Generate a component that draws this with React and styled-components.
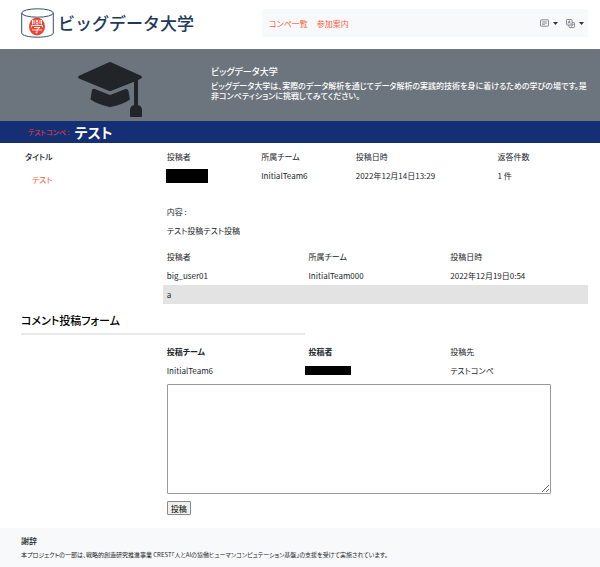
import React from "react";
import styled, { createGlobalStyle } from "styled-components";

const Global = createGlobalStyle`
  *, *::before, *::after { box-sizing: border-box; }
  body {
    margin: 0;
    background: #fff;
    color: #212529;
    font-family: "Noto Sans CJK JP", sans-serif;
    font-size: 8px;
    line-height: 11px;
    font-feature-settings: "palt";
  }
  h1, h2, h3, p { margin: 0; }
  a { color: #ff5a3c; text-decoration: none; }
`;

const Header = styled.header`
  display: grid;
  grid-template-columns: 241fr 326fr;
  align-items: center;
  padding: 8px 12px 11px 21px;
`;

const Brand = styled.a`
  display: flex;
  align-items: center;
  gap: 4px;
  color: #1d3a5c;
  font-size: 17px;
  font-weight: 500;
  line-height: 28px;
  white-space: nowrap;
  font-feature-settings: normal;
`;

const Nav = styled.nav`
  display: flex;
  align-items: center;
  height: 28px;
  gap: 9px;
  padding: 0 4px 0 7px;
  background: #f8f9fa;
`;

const NavTools = styled.div`
  display: flex;
  gap: 8px;
  margin-left: auto;
`;

const ToolButton = styled.button`
  display: flex;
  align-items: center;
  gap: 4px;
  padding: 0;
  border: 0;
  background: none;
  color: #6f6a78;
`;

const Banner = styled.section`
  display: grid;
  grid-template-columns: 1fr 2fr;
  min-height: 72px;
  padding: 0 12px 0 21px;
  background: #6c757d;
  color: #fff;
`;

const BannerArt = styled.div`
  padding: 13px 0 0 57px;
  color: #212529;
  svg { display: block; }
`;

const BannerText = styled.div`
  padding: 16px 0 0 1px;
`;

const BannerTitle = styled.h2`
  font-size: 9px;
  font-weight: 500;
  line-height: 14px;
  margin-bottom: 2px;
`;

const BannerCopy = styled.p`
  font-weight: 500;
  line-height: 10px;
`;

const TitleBar = styled.div`
  display: flex;
  align-items: center;
  gap: 5px;
  height: 22px;
  padding: 0 28px;
  background: #142f73;
  a {
    color: #f0423c;
    font-size: 7px;
  }
`;

const PageTitle = styled.h1`
  color: #fff;
  font-size: 14px;
  font-weight: 700;
  line-height: 20px;
`;

const Main = styled.main`
  padding: 4px 12px 13px 21px;
`;

const Columns = styled.section`
  display: grid;
  grid-template-columns: 1fr 3fr;
`;

const Side = styled.div`
  padding: 4px;
`;

const SideTitle = styled.h2`
  font-size: 8px;
  font-weight: 500;
  line-height: 11px;
  margin-bottom: 12px;
`;

const SideLink = styled.a`
  padding-left: 7px;
`;

const Body = styled.div`
  grid-column: 2;
`;

const Table = styled.table`
  width: 100%;
  table-layout: fixed;
  border-collapse: collapse;
`;

const Head = styled.th`
  width: ${(p) => p.$width};
  height: 19px;
  padding: 0 4px;
  text-align: left;
  font-weight: ${(p) => (p.$strong ? 700 : 400)};
`;

const Cell = styled.td`
  height: 19px;
  padding: 0 4px;
  background: ${(p) => (p.$shaded ? "#e3e3e3" : "transparent")};
`;

const Redacted = styled.span`
  display: block;
  width: ${(p) => p.$width};
  height: ${(p) => p.$height};
  margin-left: ${(p) => p.$offset};
  background: #000;
`;

const Content = styled.div`
  display: grid;
  gap: 8px;
  padding: 21px 4px 11px;
`;

const FormTitle = styled.h2`
  width: 50%;
  margin-bottom: 7px;
  padding: 7px 0 4px;
  border-bottom: 2px solid #e9e9e9;
  color: #000;
  font-size: 11px;
  font-weight: 500;
  line-height: 18px;
`;

const Form = styled.form`
  display: flex;
  flex-direction: column;
  align-items: flex-start;
  gap: 7px;
  padding: 4px 4px 0;
`;

const CommentBox = styled.textarea`
  display: block;
  width: 92%;
  height: 110px;
  border: 1px solid #999;
  border-radius: 1px;
  font: inherit;
`;

const Submit = styled.button`
  height: 14px;
  padding: 0 3px;
  border: 1px solid #8a8a8a;
  border-radius: 1px;
  background: #efefef;
  color: #000;
  font: inherit;
`;

const Footer = styled.footer`
  padding: 6px 12px 7px 21px;
  background: #f8f9fa;
  font-size: 6px;
`;

const FooterTitle = styled.h3`
  font-size: 8px;
  font-weight: 500;
  line-height: 13px;
  margin-bottom: 2px;
`;

const Logo = () => (
  <svg width="33" height="30" viewBox="0 0 33 30" fill="none" aria-hidden="true">
    <path d="M.7 5v20c0 2.400 7 4.200 15.800 4.200s15.800-1.800 15.800-4.200V5" stroke="#34506e" />
    <ellipse cx="16.500" cy="5" rx="15.800" ry="4.200" stroke="#34506e" />
    <ellipse cx="16" cy="18.500" rx="8" ry="9" fill="#ee4130" />
    <path d="M11.500 12v4.500M20.500 12v4.500M11 13h3M11 15h3M18 13h3M18 15h3M14.700 12l2.600 2M17.300 12l-2.600 2M14.700 14.500l2.600 2M17.300 14.500l-2.600 2M10.500 19.500v-2h11v2M13 19.500h6l-3 2v3.500l-1.500-.5M11 22h10" stroke="#fff" strokeWidth=".9" />
  </svg>
);

const Mortarboard = () => (
  <svg width="64" height="55" viewBox="0 0 64 55" fill="currentColor" aria-hidden="true">
    <path d="M30.500.5Q32-.3 33.500.5L63 13.700Q65 15 63 16.500L60 18v25q4 1 4 5v7H52v-7q0-4 4-5V19.800L33.500 28.700Q32 29.400 30.500 28.700L1 16.500Q-1 15 1 13.700Z" />
    <path d="M13.800 28.800Q14.400 26.200 16.800 27L32 33l15.500-6q2.300-.6 2.900 1.800L52 37.500Q45 42.500 33.500 44.700Q32 45.200 30.500 44.700Q19 42 12.500 37.500Z" stroke="#6c757d" strokeWidth="2" paintOrder="stroke" />
  </svg>
);

const Caret = () => (
  <svg width="5" height="3" viewBox="0 0 5 3" fill="#333" aria-hidden="true">
    <path d="M0 0h5L2.500 3z" />
  </svg>
);

const CardIcon = () => (
  <svg width="9" height="8" viewBox="0 0 9 8" fill="none" stroke="currentColor" strokeWidth=".8" aria-hidden="true">
    <rect x=".5" y=".8" width="8" height="6.400" rx=".8" />
    <path d="M2 2.800h5M2 4.200h5M2 5.600h3" strokeWidth=".6" />
  </svg>
);

const TranslateIcon = () => (
  <svg width="9" height="9" viewBox="0 0 9 9" fill="none" stroke="currentColor" strokeWidth=".8" aria-hidden="true">
    <path d="M3 6H1.200Q.5 6 .5 5.200V1.200Q.5.500 1.200.500h4Q6 .5 6 1.200V3M6 3.500h1.700q.8 0 .8.800v3.400q0 .8-.8.800H3.800Q3 8.500 3 7.700V6h3Z" />
    <path d="M2 4.500l1.200-2.800 1.200 2.800M2.400 3.600h1.600M6.500 5.200h1.200M5 7.500q1.500-.5 2-2" strokeWidth=".7" />
  </svg>
);

export default function App() {
  return (
    <>
      <Global />
      <Header>
        <Brand href="#"><Logo />ビッグデータ大学</Brand>
        <Nav>
          <a href="#competitions">コンペ一覧</a>
          <a href="#guide">参加案内</a>
          <NavTools>
            <ToolButton type="button" aria-label="メニュー"><CardIcon /><Caret /></ToolButton>
            <ToolButton type="button" aria-label="言語"><TranslateIcon /><Caret /></ToolButton>
          </NavTools>
        </Nav>
      </Header>
      <Banner>
        <BannerArt><Mortarboard /></BannerArt>
        <BannerText>
          <BannerTitle>ビッグデータ大学</BannerTitle>
          <BannerCopy>
            ビッグデータ大学は、実際のデータ解析を通じてデータ解析の実践的技術を身に着けるための学びの場です。是非コンペティションに挑戦してみてください。
          </BannerCopy>
        </BannerText>
      </Banner>
      <TitleBar>
        <a href="#competition">テストコンペ :</a>
        <PageTitle>テスト</PageTitle>
      </TitleBar>
      <Main>
        <Columns>
          <Side>
            <SideTitle>タイトル</SideTitle>
            <SideLink href="#post">テスト</SideLink>
          </Side>
          <Body>
            <Table>
              <thead>
                <tr>
                  <Head scope="col" $width="22.22%">投稿者</Head>
                  <Head scope="col" $width="22.22%">所属チーム</Head>
                  <Head scope="col" $width="33.33%">投稿日時</Head>
                  <Head scope="col">返答件数</Head>
                </tr>
              </thead>
              <tbody>
                <tr>
                  <Cell><Redacted $width="42px" $height="14px" $offset="-1px" /></Cell>
                  <Cell>InitialTeam6</Cell>
                  <Cell>2022年12月14日13:29</Cell>
                  <Cell>1 件</Cell>
                </tr>
              </tbody>
            </Table>
            <Content>
              <p>内容 :</p>
              <p>テスト投稿テスト投稿</p>
            </Content>
            <Table>
              <thead>
                <tr>
                  <Head scope="col">投稿者</Head>
                  <Head scope="col">所属チーム</Head>
                  <Head scope="col">投稿日時</Head>
                </tr>
              </thead>
              <tbody>
                <tr>
                  <Cell>big_user01</Cell>
                  <Cell>InitialTeam000</Cell>
                  <Cell>2022年12月19日0:54</Cell>
                </tr>
                <tr><Cell colSpan={3} $shaded>a</Cell></tr>
              </tbody>
            </Table>
          </Body>
        </Columns>
        <FormTitle id="form-title">コメント投稿フォーム</FormTitle>
        <Columns>
          <Body>
            <Table>
              <thead>
                <tr>
                  <Head scope="col" $strong>投稿チーム</Head>
                  <Head scope="col" $strong>投稿者</Head>
                  <Head scope="col">投稿先</Head>
                </tr>
              </thead>
              <tbody>
                <tr>
                  <Cell>InitialTeam6</Cell>
                  <Cell><Redacted $width="46px" $height="9px" $offset="-4px" /></Cell>
                  <Cell>テストコンペ</Cell>
                </tr>
              </tbody>
            </Table>
            <Form onSubmit={(e) => e.preventDefault()}>
              <CommentBox aria-labelledby="form-title" />
              <Submit type="submit">投稿</Submit>
            </Form>
          </Body>
        </Columns>
      </Main>
      <Footer>
        <FooterTitle>謝辞</FooterTitle>
        <p>本プロジェクトの一部は、戦略的創造研究推進事業 CREST「人とAIの協働ヒューマンコンピュテーション基盤」の支援を受けて実施されています。</p>
      </Footer>
    </>
  );
}
